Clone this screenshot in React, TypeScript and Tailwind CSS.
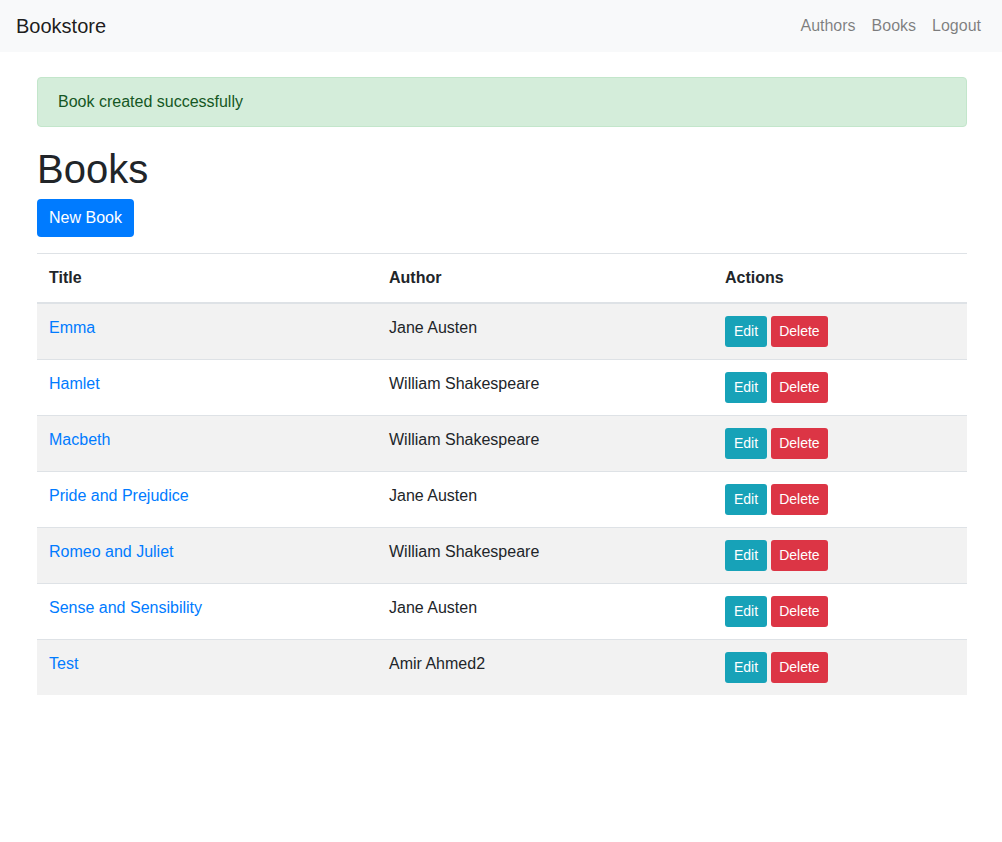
const books = [
  { title: "Emma", author: "Jane Austen" },
  { title: "Hamlet", author: "William Shakespeare" },
  { title: "Macbeth", author: "William Shakespeare" },
  { title: "Pride and Prejudice", author: "Jane Austen" },
  { title: "Romeo and Juliet", author: "William Shakespeare" },
  { title: "Sense and Sensibility", author: "Jane Austen" },
  { title: "Test", author: "Amir Ahmed2" },
];

const App = () => {
  return (
    <div className="min-h-screen bg-white text-[#212529] text-base leading-6 font-['Segoe_UI','Liberation_Sans',sans-serif]">
      <nav className="h-[52px] bg-[#f8f9fa] flex items-center justify-between pl-4 pr-[13px]">
        <a href="#" className="text-xl text-[#000000e6]">
          Bookstore
        </a>
        <div className="flex">
          <a href="#" className="px-2 text-[#00000080]">
            Authors
          </a>
          <a href="#" className="px-2 text-[#00000080]">
            Books
          </a>
          <a href="#" className="px-2 text-[#00000080]">
            Logout
          </a>
        </div>
      </nav>

      <div className="max-w-[960px] mx-auto pl-[16px] pr-[14px] pt-[25px]">
        <div className="bg-[#d4edda] border border-[#c3e6cb] text-[#155724] rounded px-5 py-3 mb-4">
          Book created successfully
        </div>

        <h1 className="text-[40px] leading-[1.2] font-medium pt-[2px] mb-[6px]">Books</h1>
        <a
          href="#"
          className="inline-block bg-[#007bff] text-white rounded px-3 py-[7px] leading-6 mb-4"
        >
          New Book
        </a>

        <table className="w-full border-collapse">
          <thead>
            <tr className="text-left">
              <th className="w-[340px] p-3 border-t border-[#dee2e6] border-b-2 font-bold">
                Title
              </th>
              <th className="w-[336px] p-3 border-t border-[#dee2e6] border-b-2 font-bold">
                Author
              </th>
              <th className="p-3 border-t border-[#dee2e6] border-b-2 font-bold">
                Actions
              </th>
            </tr>
          </thead>
          <tbody>
            {books.map((b, i) => (
              <tr key={b.title} className={i % 2 === 0 ? "bg-[#f2f2f2]" : ""}>
                <td className="p-3 border-t border-[#dee2e6] align-top">
                  <a href="#" className="text-[#007bff]">
                    {b.title}
                  </a>
                </td>
                <td className="p-3 border-t border-[#dee2e6] align-top">
                  {b.author}
                </td>
                <td className="p-3 border-t border-[#dee2e6] align-top">
                  <div className="flex gap-1">
                    <button className="bg-[#17a2b8] text-white text-sm leading-[21px] px-[9px] py-[5px] rounded-[3px]">
                      Edit
                    </button>
                    <button className="bg-[#dc3545] text-white text-sm leading-[21px] px-2 py-[5px] rounded-[3px]">
                      Delete
                    </button>
                  </div>
                </td>
              </tr>
            ))}
          </tbody>
        </table>
      </div>
    </div>
  );
};

export default App;
